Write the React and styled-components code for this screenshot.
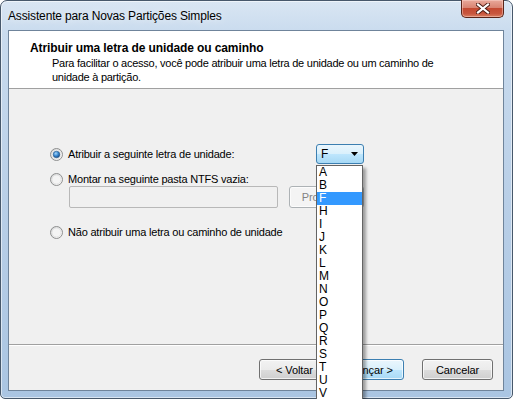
import React from 'react'
import styled, { createGlobalStyle } from 'styled-components'

const Global = createGlobalStyle`
  html, body {
    margin: 0;
    padding: 0;
    overflow: hidden;
    background: #ffffff;
  }
  body {
    font-family: "Liberation Sans", Arial, sans-serif;
    font-size: 11px;
    color: #000;
  }
`

const Window = styled.div`
  width: 513px;
  height: 399px;
  box-sizing: border-box;
  display: flex;
  flex-direction: column;
  padding: 0 8px 7px 7px;
  border: 1px solid #47586b;
  border-radius: 7px 7px 5px 5px;
  background: linear-gradient(to bottom, #d9e6f3 0%, #c9dbee 8%, #b9cfe7 50%, #aac5e2 100%);
  box-shadow: inset 0 0 0 1px rgba(255, 255, 255, 0.55);
`

const TitleBar = styled.div`
  height: 29px;
  display: flex;
  align-items: flex-start;
  justify-content: space-between;
`

const Caption = styled.span`
  margin-top: 8px;
  font-size: 12px;
  letter-spacing: -0.15px;
  color: #000;
  text-shadow: 0 0 8px rgba(255, 255, 255, 0.9);
`

const CloseButton = styled.div`
  width: 43px;
  height: 18px;
  margin-top: -1px;
  box-sizing: border-box;
  border: 1px solid #5a2418;
  border-top: none;
  border-radius: 0 0 5px 5px;
  background: linear-gradient(to bottom, #e9a99b 0%, #d98472 45%, #c44a32 50%, #c8563e 80%, #d97f62 100%);
  box-shadow: inset 0 0 0 1px rgba(255, 220, 210, 0.45);
  display: flex;
  align-items: center;
  justify-content: center;
`

const Client = styled.div`
  flex: 1;
  display: flex;
  flex-direction: column;
  border: 1px solid #6f849b;
  background: #f0f0f0;
`

const Header = styled.div`
  height: 58px;
  background: #ffffff;
  border-bottom: 1px solid #a0a0a0;
  padding: 10px 0 0 21px;
  box-sizing: border-box;
`

const HeaderTitle = styled.div`
  font-weight: bold;
  font-size: 12px;
  line-height: 15px;
  letter-spacing: -0.1px;
`

const HeaderText = styled.div`
  margin: 0 0 0 22px;
  font-size: 11px;
  line-height: 14px;
  letter-spacing: -0.25px;
  white-space: nowrap;
`

const Body = styled.div`
  flex: 1;
  padding: 55px 0 0 41px;
  display: flex;
  flex-direction: column;
`

const Row = styled.div`
  display: flex;
  align-items: center;
  height: ${(p) => p.$h || 16}px;
  margin-top: ${(p) => p.$mt || 0}px;
`

const RadioLabel = styled.label`
  display: flex;
  align-items: center;
  gap: 5px;
  width: ${(p) => (p.$w ? p.$w + 'px' : 'auto')};
  line-height: 14px;
  letter-spacing: -0.2px;
`

const FieldRow = styled.div`
  display: flex;
  margin: 0 0 0 19px;
  gap: 11px;
`

const TextBox = styled.div`
  width: 209px;
  height: 22px;
  box-sizing: border-box;
  border: 1px solid #b8b8b8;
  border-radius: 2px;
  background: #f0f0f0;
`

const Button = styled.div`
  width: ${(p) => p.$w || 71}px;
  height: ${(p) => p.$h || 21}px;
  box-sizing: border-box;
  display: flex;
  align-items: center;
  justify-content: center;
  border-radius: 3px;
  letter-spacing: -0.1px;
  border: 1px solid ${(p) => (p.$disabled ? '#adb2b5' : p.$default ? '#3c7fb1' : '#707070')};
  color: ${(p) => (p.$disabled ? '#838383' : '#000')};
  background: ${(p) =>
    p.$disabled
      ? '#f4f4f4'
      : p.$default
      ? 'linear-gradient(to bottom, #eaf6fd 0%, #d9f0fc 50%, #bee6fd 51%, #a7d9f5 100%)'
      : 'linear-gradient(to bottom, #f2f2f2 0%, #ebebeb 50%, #dddddd 51%, #cfcfcf 100%)'};
  box-shadow: inset 0 0 0 1px rgba(255, 255, 255, 0.7);
  white-space: nowrap;
`

const ComboWrap = styled.div`
  position: relative;
`

const Combo = styled.div`
  width: 48px;
  height: 20px;
  box-sizing: border-box;
  border: 1px solid #3c7fb1;
  border-radius: 3px;
  background: linear-gradient(to bottom, #eaf6fd 0%, #d9f0fc 50%, #bee6fd 51%, #a7d9f5 100%);
  display: flex;
  align-items: center;
  justify-content: space-between;
  padding: 0 5px 0 4px;
  font-size: 12px;
`

const DropList = styled.div`
  position: absolute;
  top: 21px;
  left: 0;
  width: 47px;
  box-sizing: border-box;
  border: 1px solid #646464;
  background: #ffffff;
  box-shadow: 3px 3px 3px rgba(0, 0, 0, 0.35);
  z-index: 10;
`

const Item = styled.div`
  height: 13px;
  line-height: 13px;
  font-size: 12px;
  padding-left: 2px;
  background: ${(p) => (p.$sel ? '#3399ff' : 'transparent')};
  color: ${(p) => (p.$sel ? '#ffffff' : '#000')};
`

const Footer = styled.div`
  height: 46px;
  box-sizing: border-box;
  border-top: 1px solid #a0a0a0;
  box-shadow: inset 0 1px 0 #ffffff;
  display: flex;
  justify-content: flex-end;
  align-items: flex-start;
  padding: 14px 10px 0 0;
  gap: 3px;
`

const Spacer = styled.div`
  width: 12px;
`

function Radio({ checked }) {
  return (
    <svg width="13" height="13" viewBox="0 0 13 13">
      <defs>
        <linearGradient id="rf" x1="0" y1="0" x2="1" y2="1">
          <stop offset="0" stopColor="#cfd0d1" />
          <stop offset="1" stopColor="#ffffff" />
        </linearGradient>
        <radialGradient id="rd" cx="0.4" cy="0.35" r="0.7">
          <stop offset="0" stopColor="#a7d6f8" />
          <stop offset="0.5" stopColor="#3a8ad3" />
          <stop offset="1" stopColor="#11407a" />
        </radialGradient>
      </defs>
      <circle cx="6.5" cy="6.5" r="6" fill="url(#rf)" stroke="#8e8f8f" strokeWidth="1" />
      <circle cx="6.5" cy="6.5" r="4.5" fill="#f4f4f4" stroke="#e0e0e0" strokeWidth="0.8" />
      {checked && <circle cx="6.5" cy="6.5" r="3.3" fill="url(#rd)" stroke="#2a5a8c" strokeWidth="0.6" />}
    </svg>
  )
}

const letters = 'ABFHIJKLMNOPQRSTUVWXYZ'.split('')

export default function App() {
  return (
    <>
      <Global />
      <Window>
        <TitleBar>
          <Caption>Assistente para Novas Partições Simples</Caption>
          <CloseButton>
            <svg width="14" height="11" viewBox="0 0 14 11">
              <path d="M2 1.5 L12 9.5 M12 1.5 L2 9.5" stroke="#4a1a12" strokeWidth="4" strokeLinecap="square" />
              <path d="M2 1.5 L12 9.5 M12 1.5 L2 9.5" stroke="#ffffff" strokeWidth="2.2" strokeLinecap="square" />
            </svg>
          </CloseButton>
        </TitleBar>
        <Client>
          <Header>
            <HeaderTitle>Atribuir uma letra de unidade ou caminho</HeaderTitle>
            <HeaderText>
              Para facilitar o acesso, você pode atribuir uma letra de unidade ou um caminho de
              <br />
              unidade à partição.
            </HeaderText>
          </Header>
          <Body>
            <Row $h={20}>
              <RadioLabel $w={266}>
                <Radio checked />
                Atribuir a seguinte letra de unidade:
              </RadioLabel>
              <ComboWrap>
                <Combo>
                  <span>F</span>
                  <svg width="7" height="4" viewBox="0 0 7 4">
                    <path d="M0 0 H7 L3.5 4 Z" fill="#000" />
                  </svg>
                </Combo>
                <DropList>
                  {letters.map((l) => (
                    <Item key={l} $sel={l === 'F'}>
                      {l}
                    </Item>
                  ))}
                </DropList>
              </ComboWrap>
            </Row>
            <Row $h={14} $mt={8}>
              <RadioLabel>
                <Radio />
                Montar na seguinte pasta NTFS vazia:
              </RadioLabel>
            </Row>
            <FieldRow>
              <TextBox />
              <Button $w={75} $h={22} $disabled>
                Procurar...
              </Button>
            </FieldRow>
            <Row $mt={16}>
              <RadioLabel>
                <Radio />
                Não atribuir uma letra ou caminho de unidade
              </RadioLabel>
            </Row>
          </Body>
          <Footer>
            <Button>&lt; Voltar</Button>
            <Button $default>Avançar &gt;</Button>
            <Spacer />
            <Button>Cancelar</Button>
          </Footer>
        </Client>
      </Window>
    </>
  )
}
